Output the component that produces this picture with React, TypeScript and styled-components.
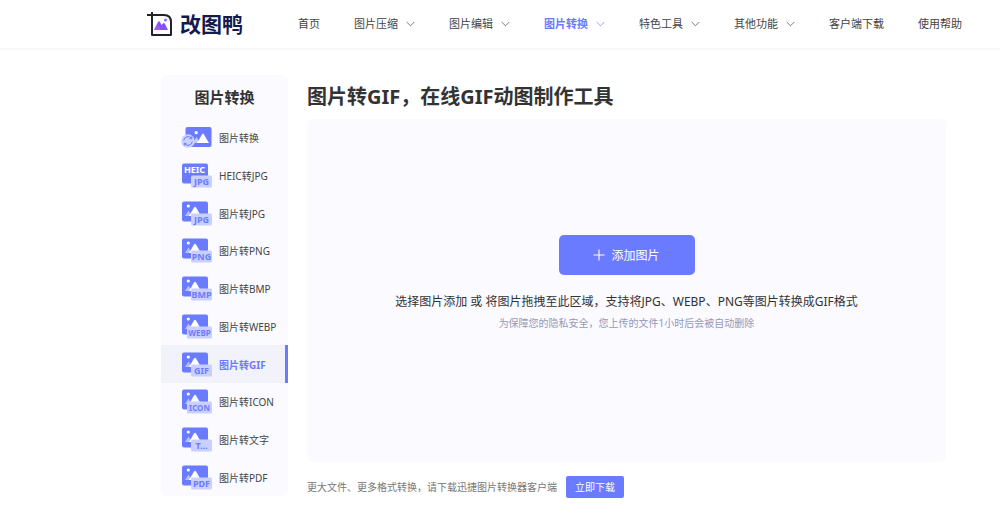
import React from "react";
import styled, { createGlobalStyle } from "styled-components";

const blue = "#6b7bff";

const GlobalStyle = createGlobalStyle`
  *, *::before, *::after { box-sizing: border-box; }
  body {
    margin: 0;
    background: #fff;
    color: #333;
    font-family: "Noto Sans", "Noto Sans CJK SC", sans-serif;
    font-size: 10px;
  }
  h1, h2, p, ul { margin: 0; padding: 0; }
  ul { list-style: none; }
  a { color: inherit; text-decoration: none; }
  button { font-family: inherit; border: 0; cursor: pointer; }
`;

const Header = styled.header`
  display: flex;
  align-items: center;
  height: 48px;
  padding-left: 146px;
  background: #fff;
  box-shadow: 0 1px 3px rgba(0, 0, 0, 0.05);
`;

const Logo = styled.a`
  display: flex;
  align-items: center;
  gap: 6px;
  width: 152px;
  flex: none;
  color: #141a4c;
  font-size: 21px;
  font-weight: 700;
  line-height: 24px;
`;

const NavList = styled.ul`
  display: flex;
  gap: 34px;
`;

const NavLink = styled.a<{ $active?: boolean }>`
  display: flex;
  align-items: center;
  gap: 8px;
  font-size: 11px;
  line-height: 20px;
  white-space: nowrap;
  color: ${(p) => (p.$active ? blue : "#444")};
  font-weight: ${(p) => (p.$active ? 700 : 400)};
`;

const Page = styled.div`
  display: flex;
  align-items: flex-start;
  gap: 19px;
  padding: 27px 54px 17px 161px;
`;

const Sidebar = styled.aside`
  flex: none;
  width: 127px;
  border-radius: 6px;
  background: #fafaff;
`;

const SidebarTitle = styled.h2`
  font-size: 15px;
  line-height: 44px;
  text-align: center;
`;

const ToolList = styled.ul`
  display: grid;
  grid-auto-rows: 1fr;
  min-height: 377px;
`;

const ToolLink = styled.a<{ $active?: boolean }>`
  display: flex;
  align-items: center;
  gap: 7px;
  height: 100%;
  padding-left: 20px;
  white-space: nowrap;
  color: ${(p) => (p.$active ? blue : "#444")};
  font-weight: ${(p) => (p.$active ? 700 : 400)};
  background: ${(p) => (p.$active ? "#f1f2fa" : "transparent")};
  border-right: 3px solid ${(p) => (p.$active ? blue : "transparent")};
`;

const Main = styled.main`
  flex: 1;
  min-width: 0;
`;

const Title = styled.h1`
  font-size: 20px;
  line-height: 44px;
`;

const DropArea = styled.section`
  display: flex;
  flex-direction: column;
  align-items: center;
  min-height: 343px;
  padding: 116px 20px 0;
  border-radius: 6px;
  background: #fafaff;
  text-align: center;
`;

const AddButton = styled.button`
  display: flex;
  align-items: center;
  justify-content: center;
  gap: 6px;
  width: 136px;
  height: 40px;
  border-radius: 5px;
  background: ${blue};
  color: #fff;
  font-size: 12px;
`;

const Description = styled.p`
  margin-top: 17px;
  font-size: 12px;
  line-height: 20px;
`;

const Hint = styled.p`
  margin-top: 3px;
  line-height: 16px;
  color: #9599b8;
`;

const ClientRow = styled.div`
  display: flex;
  align-items: center;
  gap: 9px;
  margin-top: 14px;
  line-height: 22px;
  color: #777;
`;

const DownloadButton = styled.button`
  width: 58px;
  height: 22px;
  padding: 0 0 2px;
  border-radius: 2px;
  background: ${blue};
  color: #fff;
  font-size: 10px;
`;

const BadgeText = styled.text`
  font-family: "Noto Sans", sans-serif;
  font-weight: 700;
`;

const LogoMark = () => (
  <svg width="28" height="26" viewBox="0 0 28 26" fill="none" aria-hidden="true">
    <path d="M1 4H18Q25 4 25 11V24H6V1" stroke="#20222c" strokeWidth="2" strokeLinejoin="round" />
    <path
      d="M8 19L12 11Q13 9.500 14 11L15.500 14L17 12.500Q18 11.500 19 13L22 19Z"
      fill="#8450f7"
    />
    <path d="M8 19L12 14L15 19Z" fill="#a25cf8" />
    <circle cx="19.500" cy="9" r="1.500" fill="#9a63f8" />
  </svg>
);

const Chevron = () => (
  <svg width="9" height="6" viewBox="0 0 9 6" fill="none" stroke="currentColor" aria-hidden="true">
    <path d="M0.700 1L4.500 4.800L8.300 1" strokeWidth="0.700" />
  </svg>
);

const Plus = () => (
  <svg width="12" height="12" viewBox="0 0 12 12" stroke="currentColor" aria-hidden="true">
    <path d="M6 0.500V11.500M0.500 6H11.500" strokeWidth="1.100" />
  </svg>
);

const ConvertIcon = () => (
  <svg width="31" height="25" viewBox="0 0 31 25" aria-hidden="true">
    <rect x="4.500" y="2" width="26" height="20" rx="2" fill={blue} />
    <circle cx="15.200" cy="7.700" r="1.600" fill="#fff" />
    <path d="M12 18L15.500 12L19 18Z" fill="#c3caff" />
    <path d="M16 18L21.300 9Q22 8 22.700 9L28 18Z" fill="#fff" />
    <circle cx="7" cy="16" r="6.800" fill="#ccd2ff" />
    <g fill="none" stroke={blue} strokeWidth="1">
      <path d="M2.700 15.500A4.400 4.400 0 0 1 10.500 13.300M11.300 16.500A4.400 4.400 0 0 1 3.500 18.700" />
      <path d="M10.800 11.200V13.700H8.500M3.200 20.800V18.300H5.500" />
    </g>
  </svg>
);

type FormatIconProps = { format: string; heic?: boolean };

const FormatIcon = ({ format, heic }: FormatIconProps) => {
  const wide = format.length === 4 && format !== "T...";
  return (
    <svg width="31" height="25" viewBox="0 0 31 25" aria-hidden="true">
      <rect x="1" y="0.500" width="26" height="20" rx="2" fill={blue} />
      {heic ? (
        <BadgeText x="13.500" y="10" fontSize="9" textAnchor="middle" fill="#fff">
          HEIC
        </BadgeText>
      ) : (
        <>
          <circle cx="7.300" cy="5" r="1.600" fill="#fff" />
          <path d="M4 15L7.500 9.500L11 15Z" fill="#b5beff" />
          <path d="M8 15L13 6.500Q14 5 15 6.500L20 15Z" fill="#fff" />
        </>
      )}
      <rect x={wide ? 6 : 10} y="12.500" width={wide ? 25 : 21} height="12" rx="1.500" fill="#c9cfff" />
      <BadgeText
        x={wide ? 18.5 : 20.5}
        y={wide ? 21.5 : 22}
        fontSize={wide ? 8 : 9}
        textAnchor="middle"
        fill={blue}
      >
        {format}
      </BadgeText>
    </svg>
  );
};

const navItems = [
  { label: "首页" },
  { label: "图片压缩", menu: true },
  { label: "图片编辑", menu: true },
  { label: "图片转换", menu: true, active: true },
  { label: "特色工具", menu: true },
  { label: "其他功能", menu: true },
  { label: "客户端下载" },
  { label: "使用帮助" },
];

const tools = [
  { label: "图片转换" },
  { label: "HEIC转JPG", format: "JPG", heic: true },
  { label: "图片转JPG", format: "JPG" },
  { label: "图片转PNG", format: "PNG" },
  { label: "图片转BMP", format: "BMP" },
  { label: "图片转WEBP", format: "WEBP" },
  { label: "图片转GIF", format: "GIF", active: true },
  { label: "图片转ICON", format: "ICON" },
  { label: "图片转文字", format: "T..." },
  { label: "图片转PDF", format: "PDF" },
];

export default function App() {
  return (
    <>
      <GlobalStyle />
      <Header>
        <Logo href="#">
          <LogoMark />
          改图鸭
        </Logo>
        <nav>
          <NavList>
            {navItems.map((item) => (
              <li key={item.label}>
                <NavLink href="#" $active={item.active}>
                  {item.label}
                  {item.menu && <Chevron />}
                </NavLink>
              </li>
            ))}
          </NavList>
        </nav>
      </Header>
      <Page>
        <Sidebar>
          <SidebarTitle>图片转换</SidebarTitle>
          <ToolList>
            {tools.map((tool) => (
              <li key={tool.label}>
                <ToolLink href="#" $active={tool.active}>
                  {tool.format ? (
                    <FormatIcon format={tool.format} heic={tool.heic} />
                  ) : (
                    <ConvertIcon />
                  )}
                  {tool.label}
                </ToolLink>
              </li>
            ))}
          </ToolList>
        </Sidebar>
        <Main>
          <Title>图片转GIF，在线GIF动图制作工具</Title>
          <DropArea>
            <AddButton type="button">
              <Plus />
              添加图片
            </AddButton>
            <Description>
              选择图片添加 或 将图片拖拽至此区域，支持将JPG、WEBP、PNG等图片转换成GIF格式
            </Description>
            <Hint>为保障您的隐私安全，您上传的文件1小时后会被自动删除</Hint>
          </DropArea>
          <ClientRow>
            <span>更大文件、更多格式转换，请下载迅捷图片转换器客户端</span>
            <DownloadButton type="button">立即下载</DownloadButton>
          </ClientRow>
        </Main>
      </Page>
    </>
  );
}
